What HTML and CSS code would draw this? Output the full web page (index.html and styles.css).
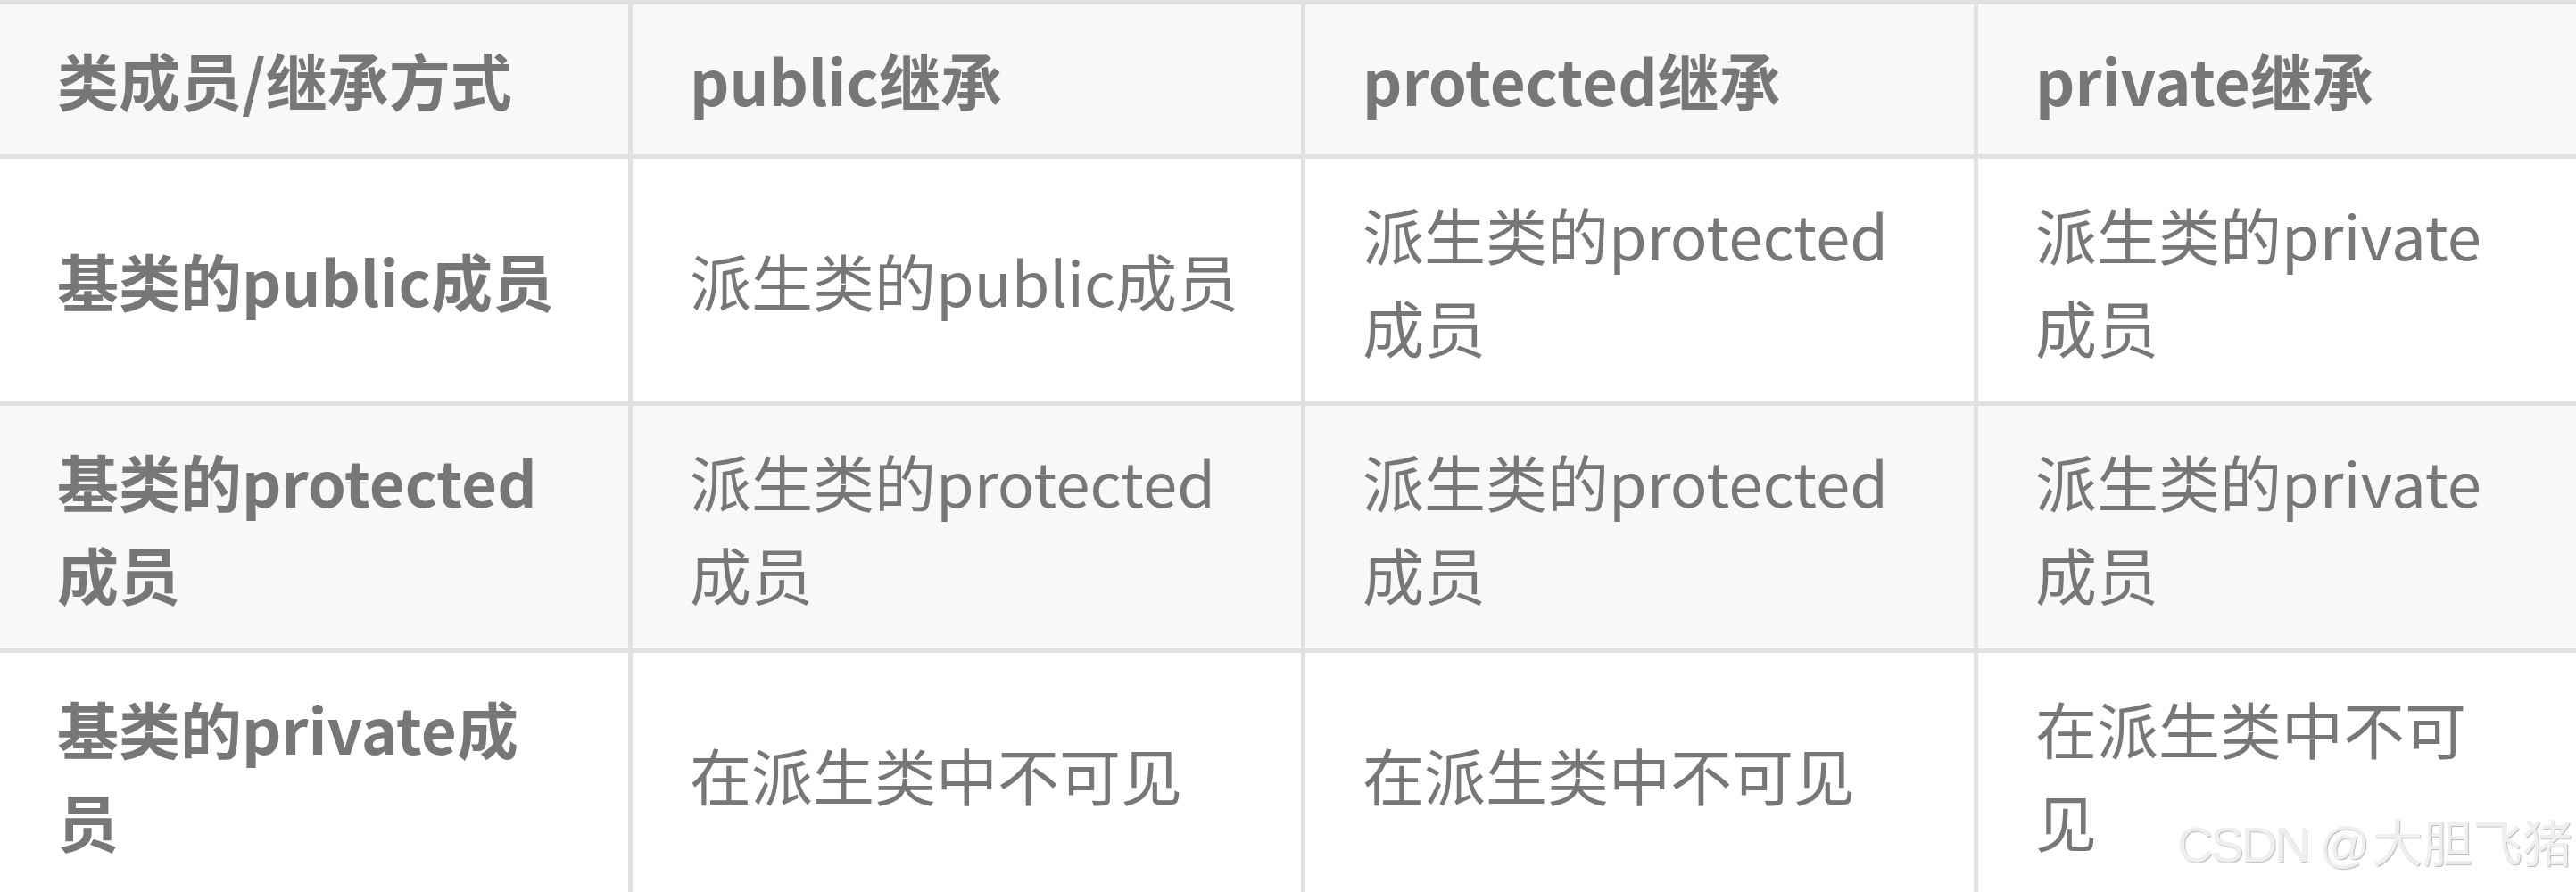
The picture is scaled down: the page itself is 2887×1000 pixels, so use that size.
FILE: index.html
```html
<!DOCTYPE html>
<html lang="zh-CN">
<head>
<meta charset="utf-8">
<title>继承方式与成员访问</title>
<link rel="stylesheet" href="styles.css">
</head>
<body>
<div class="page">
  <table class="access-table">
    <colgroup>
      <col class="col-first">
      <col class="col-mid">
      <col class="col-mid">
      <col class="col-last">
    </colgroup>
    <thead>
      <tr class="row-head">
        <th>类成员/继承方式</th>
        <th>public继承</th>
        <th>protected继承</th>
        <th>private继承</th>
      </tr>
    </thead>
    <tbody>
      <tr class="row-white">
        <th>基类的public成员</th>
        <td>派生类的public成员</td>
        <td>派生类的protected成员</td>
        <td>派生类的private成员</td>
      </tr>
      <tr class="row-grey">
        <th>基类的protected成员</th>
        <td>派生类的protected成员</td>
        <td>派生类的protected成员</td>
        <td>派生类的private成员</td>
      </tr>
      <tr class="row-white">
        <th>基类的private成员</th>
        <td>在派生类中不可见</td>
        <td>在派生类中不可见</td>
        <td>在派生类中不可见</td>
      </tr>
    </tbody>
  </table>
  <div class="watermark"><span class="wm-latin">CSDN @</span>大胆飞猪</div>
</div>
</body>
</html>
```

FILE: styles.css
```css
html, body {
  margin: 0;
  padding: 0;
  background: #ffffff;
}

body {
  overflow: hidden;
  font-family: "Noto Sans CJK SC", "Noto Sans", sans-serif;
  color: #777777;
}

.page {
  position: relative;
  width: 2887px;
  height: 1000px;
  overflow: hidden;
}

.access-table {
  table-layout: fixed;
  border-collapse: separate;
  border-spacing: 0;
  width: 2897px;
  font-size: 69px;
  line-height: 104px;
}

.col-first { width: 709px; }
.col-mid { width: 754px; }
.col-last { width: 680px; }

.access-table th,
.access-table td {
  padding: 32px 64px;
  border-right: 5px solid #dfe2e5;
  border-bottom: 5px solid #dfe2e5;
  text-align: left;
  vertical-align: middle;
  color: #777777;
}

.access-table th {
  font-weight: 700;
}

.access-table td {
  font-weight: 400;
}

.row-head th {
  border-top: 5px solid #dfe2e5;
  background: #f8f8f8;
}

.row-white th,
.row-white td {
  background: #ffffff;
}

.row-grey th,
.row-grey td {
  background: #f8f8f8;
}

.watermark {
  position: absolute;
  right: 4px;
  top: 912px;
  font-family: "Liberation Sans", "Noto Sans CJK SC", sans-serif;
  font-size: 56px;
  line-height: 70px;
  color: #efefef;
  text-shadow: 1px 1px 1px #b9b9b9, -1px -1px 0 #ffffff;
  white-space: nowrap;
}

.wm-latin {
  letter-spacing: -3px;
  margin-right: 6px;
}
```
